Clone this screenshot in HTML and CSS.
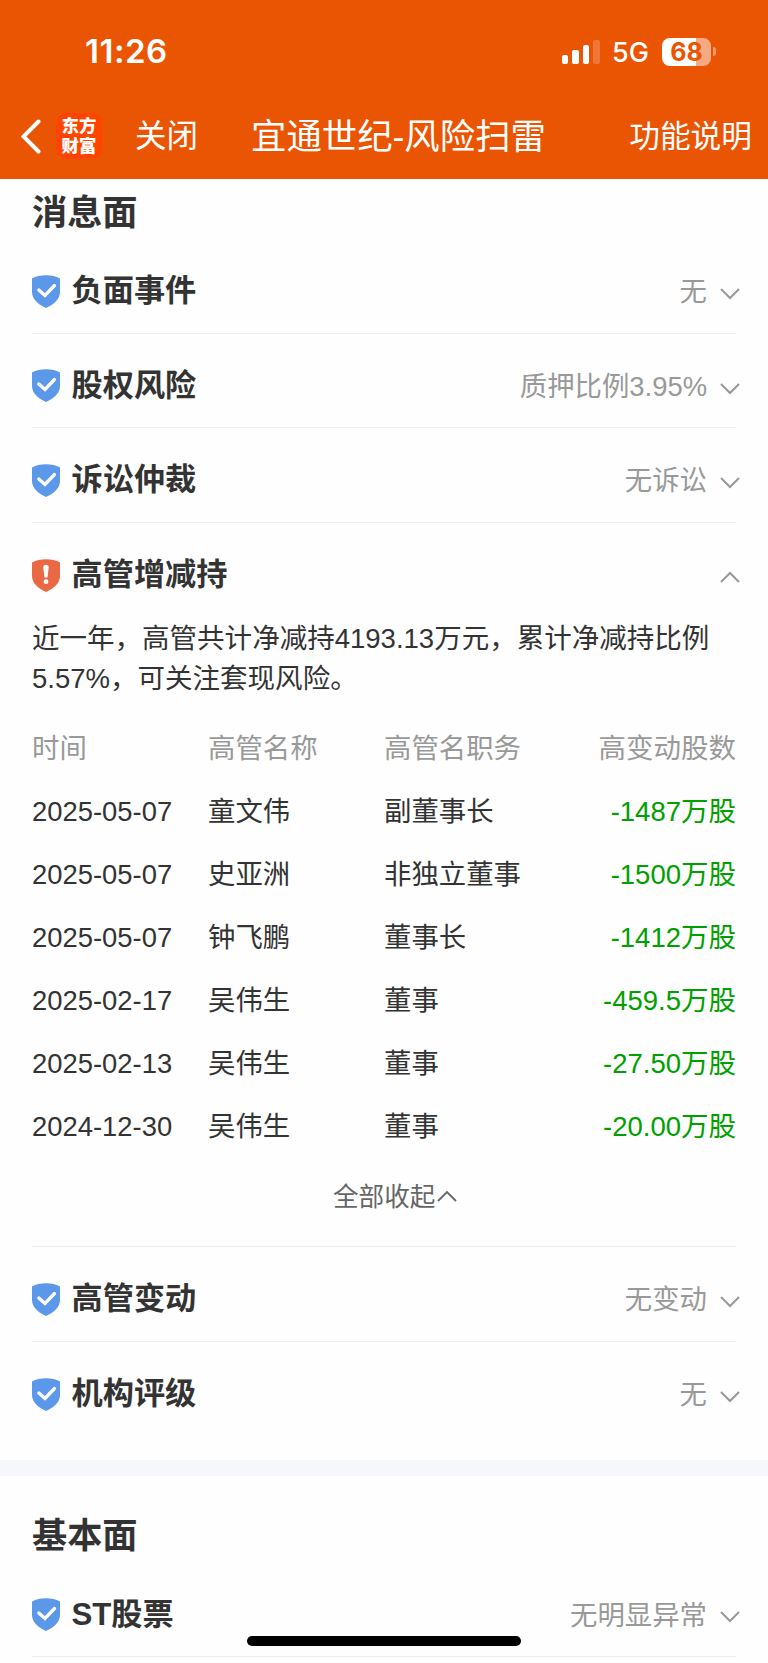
FILE: index.html
```
<!DOCTYPE html>
<html lang="zh-CN">
<head>
<meta charset="utf-8">
<title>宜通世纪-风险扫雷</title>
<link rel="stylesheet" href="styles.css">
</head>
<body>
<svg class="defs" width="0" height="0">
  <symbol id="ok" viewBox="0 0 28 33"><path fill="#5b98e9" d="M0 3.400Q6 .3 14 .3T28 3.400V17C28 24 22 29.500 14 33 6 29.500 0 24 0 17Z"/><path d="M6.800 15l6.200 5.500L22.500 10.500" fill="none" stroke="#fff" stroke-width="3.300" stroke-linecap="round"/></symbol>
  <symbol id="warn" viewBox="0 0 28 33"><path fill="#ea6844" d="M0 3.400Q6 .3 14 .3T28 3.400V17C28 24 22 29.500 14 33 6 29.500 0 24 0 17Z"/><path d="M11.300 8.500a2.700 2.700 0 0 1 5.400 0L15.500 18.500h-3Z" fill="#fff"/><circle cx="14" cy="22.700" r="2.400" fill="#fff"/></symbol>
  <symbol id="chev" viewBox="0 0 20 12"><path d="M1 1l9 9 9-9" fill="none" stroke="#999" stroke-width="2"/></symbol>
</svg>
<header class="top">
  <div class="status">
    <span class="time">11:26</span>
    <span class="signal"><i class="bar b1"></i><i class="bar b2"></i><i class="bar b3"></i><i class="bar b4"></i></span>
    <span class="net">5G</span>
    <span class="battery">68</span><i class="cap"></i>
  </div>
  <nav class="nav">
    <svg class="back" viewBox="0 0 20 35"><path d="M17.500 2.500L2.500 17.500l15 15" fill="none" stroke="#fff" stroke-width="4" stroke-linecap="round"/></svg>
    <span class="logo"><span>东方</span><span>财富</span></span>
    <span class="close">关闭</span>
    <h1 class="title">宜通世纪-风险扫雷</h1>
    <span class="help">功能说明</span>
  </nav>
</header>
<main>
  <section class="panel news">
    <h2 class="heading">消息面</h2>
    <div class="row"><svg class="shield"><use href="#ok"/></svg><span class="name">负面事件</span><span class="value">无</span><svg class="chev"><use href="#chev"/></svg></div>
    <div class="row"><svg class="shield"><use href="#ok"/></svg><span class="name">股权风险</span><span class="value">质押比例3.95%</span><svg class="chev"><use href="#chev"/></svg></div>
    <div class="row"><svg class="shield"><use href="#ok"/></svg><span class="name">诉讼仲裁</span><span class="value">无诉讼</span><svg class="chev"><use href="#chev"/></svg></div>
    <div class="expanded">
      <div class="row open"><svg class="shield"><use href="#warn"/></svg><span class="name">高管增减持</span><span class="value"></span><svg class="chev up"><use href="#chev"/></svg></div>
      <p class="summary">近一年，高管共计净减持4193.13万元，累计净减持比例<br>5.57%，可关注套现风险。</p>
      <div class="table">
        <div class="tr th"><span>时间</span><span>高管名称</span><span>高管名职务</span><span class="num">高变动股数</span></div>
        <div class="tr"><span>2025-05-07</span><span>童文伟</span><span>副董事长</span><span class="num">-1487万股</span></div>
        <div class="tr"><span>2025-05-07</span><span>史亚洲</span><span>非独立董事</span><span class="num">-1500万股</span></div>
        <div class="tr"><span>2025-05-07</span><span>钟飞鹏</span><span>董事长</span><span class="num">-1412万股</span></div>
        <div class="tr"><span>2025-02-17</span><span>吴伟生</span><span>董事</span><span class="num">-459.5万股</span></div>
        <div class="tr"><span>2025-02-13</span><span>吴伟生</span><span>董事</span><span class="num">-27.50万股</span></div>
        <div class="tr"><span>2024-12-30</span><span>吴伟生</span><span>董事</span><span class="num">-20.00万股</span></div>
      </div>
      <div class="collapse"><span>全部收起</span><svg viewBox="0 0 20 12"><path d="M1 11l9-9 9 9" fill="none" stroke="#666" stroke-width="1.800"/></svg></div>
    </div>
    <div class="row"><svg class="shield"><use href="#ok"/></svg><span class="name">高管变动</span><span class="value">无变动</span><svg class="chev"><use href="#chev"/></svg></div>
    <div class="row last"><svg class="shield"><use href="#ok"/></svg><span class="name">机构评级</span><span class="value">无</span><svg class="chev"><use href="#chev"/></svg></div>
  </section>
  <section class="panel basics">
    <h2 class="heading">基本面</h2>
    <div class="row"><svg class="shield"><use href="#ok"/></svg><span class="name">ST股票</span><span class="value">无明显异常</span><svg class="chev"><use href="#chev"/></svg></div>
  </section>
</main>
<div class="home"></div>
</body>
</html>
```
FILE: styles.css
```
* { box-sizing: border-box; }
body { margin: 0; width: 768px; height: 1663px; overflow: hidden; position: relative; background: #fefefe; color: #333; font: 27.4px/39.4px "Liberation Sans", "Noto Sans CJK SC", sans-serif; }
.defs { position: absolute; }
.top { height: 179.400px; background: #ea5504; color: #fff; }
.status { height: 103px; padding: 0 52px 0 85px; display: flex; align-items: center; font-family: Inter, sans-serif; }
.time { flex: 1; font-size: 33px; letter-spacing: .5px; font-weight: 600; padding-top: 1px; }
.signal { display: flex; align-items: flex-end; gap: 4px; height: 24px; margin-right: 12px; }
.bar { width: 6.600px; border-radius: 2px; background: #fff; }
.b1 { height: 9px; }
.b2 { height: 14px; }
.b3 { height: 19px; }
.b4 { height: 24px; opacity: .2; }
.net { width: 50px; font-size: 27px; font-weight: 500; padding-top: 2px; }
.battery { width: 49px; height: 28px; border-radius: 8px; background: linear-gradient(90deg, #fff 69%, #f6aa82 69%); color: #ea5504; font-size: 25px; line-height: 28px; font-weight: 700; text-align: center; }
.cap { width: 3px; height: 9px; margin-left: 2px; border-radius: 0 4px 4px 0; background: #f29967; }
.nav { height: 66px; padding: 0 16px 0 21px; display: flex; align-items: center; font-size: 31px; white-space: nowrap; }
.back { width: 20px; height: 35px; }
.logo { width: 46px; height: 46px; margin: 0 33px 0 15px; padding-top: 3px; border-radius: 10px; background: #ff4400; display: flex; flex-direction: column; align-items: center; font-size: 17.400px; line-height: 20px; font-weight: 900; }
.close { width: 116px; padding-top: 2px; font-size: 31.500px; }
.title { flex: 1; margin: 0; padding-top: 3px; font-size: 35.400px; font-weight: 400; }
.help { padding-top: 2px; font-size: 30.700px; }
.panel { padding: 0 32px; }
.news { height: 1280.600px; }
.basics { border-top: 16px solid #f6f7fa; }
.heading { margin: 0; height: 60px; line-height: 67px; font-size: 35.200px; font-weight: 700; }
.basics .heading { height: 86.500px; line-height: 119px; }
.row { height: 94.500px; padding-top: 9px; display: flex; align-items: center; border-bottom: 1.500px solid #ededed; }
.shield { width: 28px; height: 33px; margin: 1px 12px 0 -.5px; }
.name { padding-top: 1px; font-size: 31.200px; font-weight: 700; }
.value { flex: 1; padding-top: 3px; text-align: right; color: #999; }
.chev { width: 20px; height: 12px; margin: 7px -4px 0 13px; }
.up { margin-top: 4px; transform: rotate(180deg); }
.open, .last { border: 0; }
.expanded { height: 724.500px; border-bottom: 1.500px solid #ededed; }
.summary { margin: 0 -20px 0 0; padding-top: 2px; font-size: 27.520px; white-space: nowrap; }
.table { margin-top: 19px; }
.tr { height: 63px; display: grid; grid-template-columns: repeat(4, 1fr); align-items: center; white-space: nowrap; }
.num { text-align: right; color: #00a000; }
.tr .num { font-size: 27.500px; }
.th, .th .num { color: #999; }
.collapse { padding: 20px 0 0 301px; display: flex; align-items: center; font-size: 25.600px; color: #666; }
.collapse svg { width: 20px; height: 12px; margin: 0 0 4px 2px; }
.home { position: absolute; left: 247px; top: 1636px; width: 274px; height: 10px; border-radius: 5px; background: #000; }
```
